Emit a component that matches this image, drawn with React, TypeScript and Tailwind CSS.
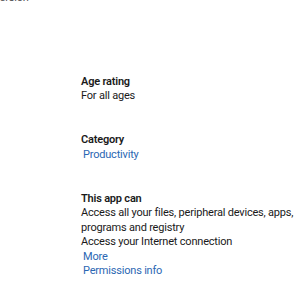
const permissions = [
  "Access all your files, peripheral devices, apps, programs and registry",
  "Access your Internet connection",
];

function Heading({ children }: { children: React.ReactNode }) {
  return <p className="font-semibold text-[#1a1a1a]">{children}</p>;
}

function LinkText({ children }: { children: React.ReactNode }) {
  return <p className="pl-[2px] text-[#2b67b3]">{children}</p>;
}

export default function App() {
  return (
    <div
      className="relative h-[300px] w-[300px] overflow-hidden bg-white text-[11px] leading-[14.5px] tracking-[-0.2px] text-[#1a1a1a]"
      style={{ fontFamily: 'Roboto, "Noto Sans", sans-serif' }}
    >
      {/* clipped label from section above */}
      <p className="-ml-[7px] -mt-[9px] text-[#555]">Version</p>

      <div className="flex flex-col gap-[29.5px] pl-[81px] pt-[69px]">
        <div>
          <Heading>Age rating</Heading>
          <p>For all ages</p>
        </div>

        <div>
          <Heading>Category</Heading>
          <LinkText>Productivity</LinkText>
        </div>

        <div className="w-[216px]">
          <Heading>This app can</Heading>
          {permissions.map((p) => (
            <p key={p}>{p}</p>
          ))}
          <LinkText>More</LinkText>
          <LinkText>Permissions info</LinkText>
        </div>
      </div>
    </div>
  );
}
